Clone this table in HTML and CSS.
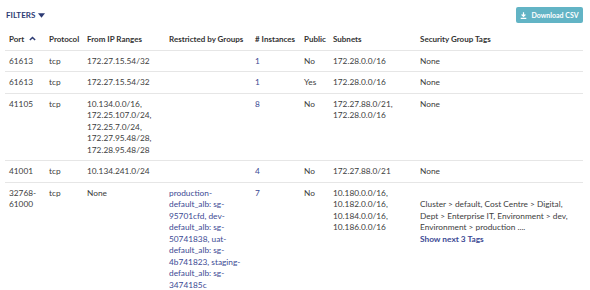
FILE: index.html
```html
<!DOCTYPE html>
<html lang="en">
<head>
    <meta charset="UTF-8">
    <title>Security Group Rules</title>
    <link rel="stylesheet" href="styles.css">
</head>
<body>
    <!-- Toolbar -->
    <div class="toolbar">
        <a href="#" class="filters">FILTERS
            <svg width="7" height="5" viewBox="0 0 8 5"><path d="M0 0h8L4 5z" fill="#2d3b74"/></svg>
        </a>
        <a href="#" class="csv-btn">
            <svg width="7" height="7" viewBox="0 0 10 10"><path d="M5 0.5v5.5M2.3 3.6L5 6.2l2.7-2.6M1 9.2h8" stroke="#fff" stroke-width="1.7" fill="none"/></svg>
            Download CSV
        </a>
    </div>

    <!-- Rules table -->
    <table class="rules">
        <colgroup>
            <col class="c-port"><col class="c-proto"><col class="c-ip"><col class="c-groups">
            <col class="c-inst"><col class="c-public"><col class="c-subnets"><col class="c-tags">
        </colgroup>
        <thead>
            <tr>
                <th>Port <svg class="sort" width="7" height="5" viewBox="0 0 8 5"><path d="M1 4.3L4 1.3l3 3" stroke="#2d3b74" stroke-width="1.7" fill="none"/></svg></th>
                <th>Protocol</th>
                <th>From IP Ranges</th>
                <th>Restricted by Groups</th>
                <th># Instances</th>
                <th>Public</th>
                <th>Subnets</th>
                <th>Security Group Tags</th>
            </tr>
        </thead>
        <tbody>
            <tr>
                <td>61613</td>
                <td>tcp</td>
                <td>172.27.15.54/32</td>
                <td></td>
                <td><a href="#">1</a></td>
                <td>No</td>
                <td>172.28.0.0/16</td>
                <td>None</td>
            </tr>
            <tr>
                <td>61613</td>
                <td>tcp</td>
                <td>172.27.15.54/32</td>
                <td></td>
                <td><a href="#">1</a></td>
                <td>Yes</td>
                <td>172.28.0.0/16</td>
                <td>None</td>
            </tr>
            <tr>
                <td>41105</td>
                <td>tcp</td>
                <td>10.134.0.0/16,<br>172.25.107.0/24,<br>172.25.7.0/24,<br>172.27.95.48/28,<br>172.28.95.48/28</td>
                <td></td>
                <td><a href="#">8</a></td>
                <td>No</td>
                <td>172.27.88.0/21,<br>172.28.0.0/16</td>
                <td>None</td>
            </tr>
            <tr>
                <td>41001</td>
                <td>tcp</td>
                <td>10.134.241.0/24</td>
                <td></td>
                <td><a href="#">4</a></td>
                <td>No</td>
                <td>172.27.88.0/21</td>
                <td>None</td>
            </tr>
            <tr>
                <td>32768-<br>61000</td>
                <td>tcp</td>
                <td>None</td>
                <td class="groups"><a href="#">production-<br>default_alb: sg-<br>95701cfd, dev-<br>default_alb: sg-<br>50741838, uat-<br>default_alb: sg-<br>4b741823, staging-<br>default_alb: sg-<br>3474185c</a></td>
                <td><a href="#">7</a></td>
                <td>No</td>
                <td>10.180.0.0/16,<br>10.182.0.0/16,<br>10.184.0.0/16,<br>10.186.0.0/16</td>
                <td>
                    <div class="tags">
                        Cluster &gt; default, Cost Centre &gt; Digital,<br>
                        Dept &gt; Enterprise IT, Environment &gt; dev,<br>
                        Environment &gt; production ....<br>
                        <a href="#" class="more">Show next 3 Tags</a>
                    </div>
                </td>
            </tr>
        </tbody>
    </table>
</body>
</html>
```

FILE: styles.css
```css
* {
    margin: 0;
    padding: 0;
    box-sizing: border-box;
}

body {
    font-family: Lato, "Liberation Sans", sans-serif;
    font-size: 8px;
    color: #3d3d3d;
    background-color: white;
}

a {
    color: #3c4a94;
    text-decoration: none;
}

.toolbar {
    display: flex;
    justify-content: space-between;
    align-items: center;
    padding: 7px 7px 6px 6px;
}

.filters {
    color: #2d3b74;
    font-weight: bold;
    font-size: 8px;
    display: flex;
    align-items: center;
    gap: 3px;
}

.csv-btn {
    background-color: #62b4c5;
    color: white;
    font-size: 7px;
    font-weight: bold;
    height: 16px;
    width: 67px;
    border-radius: 2px;
    display: flex;
    align-items: center;
    justify-content: center;
    gap: 4px;
}

.rules {
    margin-left: 5px;
    width: 578px;
    table-layout: fixed;
    border-collapse: collapse;
}

.c-port { width: 40px; }
.c-proto { width: 38px; }
.c-ip { width: 82px; }
.c-groups { width: 86px; }
.c-inst { width: 49px; }
.c-public { width: 29px; }
.c-subnets { width: 87px; }
.c-tags { width: 167px; }

.rules th,
.rules td {
    text-align: left;
    vertical-align: top;
    line-height: 11.5px;
    padding: 5px 4px 4px 4px;
    border-bottom: 1px solid #e6e6e6;
    white-space: nowrap;
}

.rules td {
    font-size: 8.3px;
}

.rules th {
    font-weight: bold;
    color: #333;
}

.rules tbody tr:last-child td {
    border-bottom: none;
}

.sort {
    margin-left: 3px;
    vertical-align: 1px;
}

.tags {
    margin-top: 11.5px;
}

.more {
    font-weight: bold;
}
```
